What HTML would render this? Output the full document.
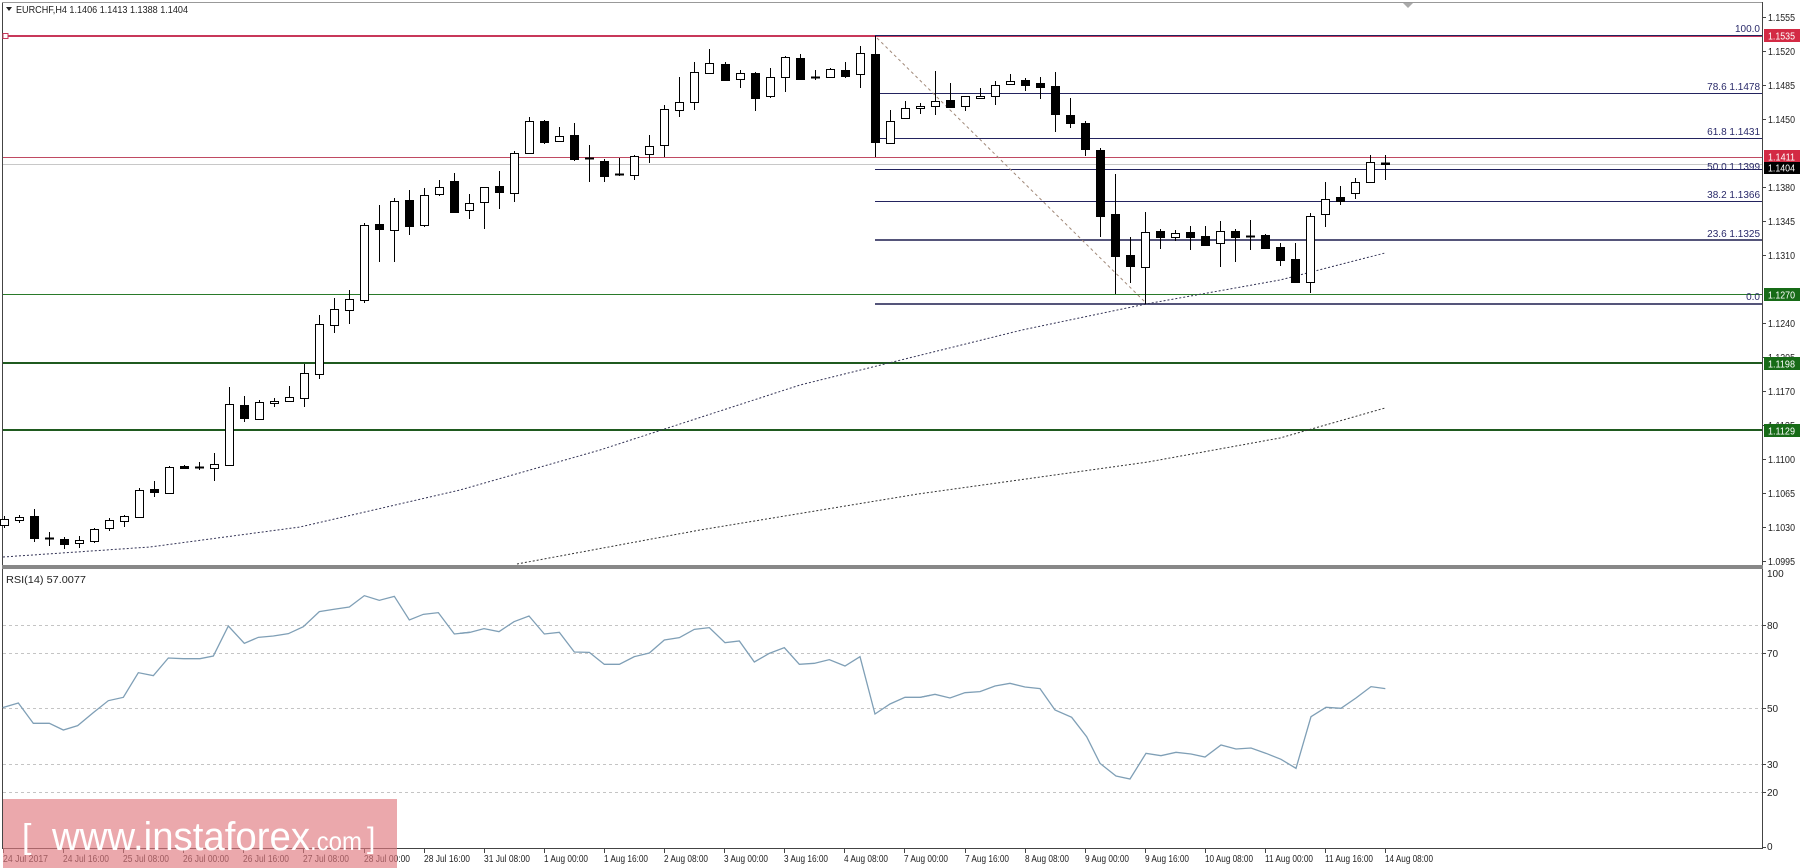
<!DOCTYPE html>
<html><head><meta charset="utf-8"><style>
html,body{margin:0;padding:0;background:#fff;}
svg{display:block;font-family:"Liberation Sans","DejaVu Sans",sans-serif;}
.w{fill:#fff;stroke:#000;stroke-width:1}
.b{fill:#000;stroke:#000;stroke-width:1}
.ax{font-size:10px;fill:#222}
.fl{font-size:10px;fill:#2a2a6a}
.tl{font-size:10px;fill:#222}
</style></head><body>
<svg width="1800" height="868" viewBox="0 0 1800 868" xmlns="http://www.w3.org/2000/svg">
<rect width="1800" height="868" fill="#fff"/>
<!-- frame -->
<g stroke="#444" stroke-width="1" shape-rendering="crispEdges">
<line x1="2.5" y1="2" x2="2.5" y2="848"/>
<line x1="2" y1="2.5" x2="1763" y2="2.5" stroke="#999"/>
<line x1="1762.5" y1="2" x2="1762.5" y2="849"/>
<line x1="2" y1="848.5" x2="1763" y2="848.5"/>
</g>
<rect x="2" y="565" width="1761" height="4" fill="#888"/>
<polygon points="1403,3 1413,3 1408,8" fill="#aaa"/>

<!-- horizontal levels -->
<g shape-rendering="crispEdges">
<line x1="3" y1="36" x2="1762" y2="36" stroke="#c8385a" stroke-width="2"/>
<rect x="3" y="33.5" width="5" height="5" fill="#fff" stroke="#c8385a"/>
<line x1="3" y1="157.5" x2="1762" y2="157.5" stroke="#c04a62" stroke-width="1"/>
<line x1="3" y1="164.5" x2="1762" y2="164.5" stroke="#c8c8c8" stroke-width="1"/>
<line x1="3" y1="294.5" x2="1762" y2="294.5" stroke="#2a7a2a" stroke-width="1"/>
<line x1="3" y1="363" x2="1762" y2="363" stroke="#1f5a1f" stroke-width="2"/>
<line x1="3" y1="430" x2="1762" y2="430" stroke="#1f5a1f" stroke-width="2"/>
<!-- fib -->
<g stroke="#23235f" stroke-width="1">
<line x1="875" y1="35.5" x2="1762" y2="35.5"/>
<line x1="875" y1="93.5" x2="1762" y2="93.5"/>
<line x1="875" y1="138.5" x2="1762" y2="138.5"/>
<line x1="875" y1="169.5" x2="1762" y2="169.5"/>
<line x1="875" y1="201.5" x2="1762" y2="201.5"/>
</g>
<line x1="875" y1="240" x2="1762" y2="240" stroke="#55557a" stroke-width="2"/>
<line x1="875" y1="304" x2="1762" y2="304" stroke="#55557a" stroke-width="2"/>
</g>
<line x1="877" y1="38" x2="1146" y2="303" stroke="#a08878" stroke-width="1" stroke-dasharray="3,3"/>
<g class="fl" text-anchor="end">
<text x="1760" y="32">100.0</text>
<text x="1760" y="90">78.6 1.1478</text>
<text x="1760" y="135">61.8 1.1431</text>
<text x="1760" y="170">50.0 1.1399</text>
<text x="1760" y="198">38.2 1.1366</text>
<text x="1760" y="237">23.6 1.1325</text>
<text x="1760" y="300">0.0</text>
</g>

<!-- moving averages -->
<polyline points="3,557 150,547 300,527 460,490 600,450 800,385 1022,330 1146,304 1280,280 1385,253" fill="none" stroke="#333355" stroke-width="1" stroke-dasharray="2,2"/>
<polyline points="517,564 700,530 918,494 1148,462 1280,438 1385,408" fill="none" stroke="#333" stroke-width="1" stroke-dasharray="2,2"/>

<!-- wicks -->
<path stroke="#000" stroke-width="1" fill="none" shape-rendering="crispEdges" d="M4.5 516V528M19.5 515V523M34.5 509V542M49.5 532V546M64.5 537V549M79.5 536V548M94.5 528V543M109.5 518V531M124.5 515V527M139.5 488V518M154.5 481V497M169.5 466V494M184.5 465V469M199.5 462V470M214.5 453V481M229.5 387V466M244.5 396V422M259.5 400V420M274.5 398V407M289.5 386V402M304.5 364V407M319.5 315V379M334.5 298V333M349.5 290V324M364.5 223V303M379.5 205V262M394.5 198V262M409.5 190V235M424.5 188V227M439.5 180V196M454.5 173V213M469.5 194V219M484.5 187V229M499.5 171V209M514.5 151V202M529.5 117V154M544.5 120V144M559.5 127V142M574.5 123V161M589.5 145V182M604.5 159V182M619.5 158V176M634.5 155V180M649.5 135V163M664.5 105V157M679.5 77V117M694.5 62V110M709.5 49V74M725.5 62V81M740.5 70V88M755.5 72V111M770.5 68V98M785.5 56V92M800.5 54V80M815.5 70V80M830.5 68V78M845.5 62V78M860.5 46V88M875.5 36V157M890.5 110V144M905.5 101V119M920.5 103V114M935.5 71V115M950.5 83V107M965.5 96V111M980.5 88V99M995.5 81V105M1010.5 74V85M1025.5 78V91M1040.5 77V99M1055.5 72V132M1070.5 98V128M1085.5 121V156M1100.5 148V237M1115.5 174V294M1130.5 237V283M1145.5 212V304M1160.5 229V249M1175.5 230V241M1190.5 226V250M1205.5 226V246M1220.5 221V267M1235.5 229V262M1250.5 220V250M1265.5 234V249M1280.5 243V266M1295.5 243V282M1310.5 213V293M1325.5 182V227M1340.5 186V205M1355.5 178V199M1370.5 155V183M1385.5 155V180"/>
<!-- bodies -->
<g shape-rendering="crispEdges">
<rect class="w" x="0.5" y="519.5" width="8" height="6"/>
<rect class="w" x="15.5" y="517.5" width="8" height="3"/>
<rect class="b" x="30.5" y="516.5" width="8" height="22"/>
<rect class="b" x="45.5" y="538" width="8" height="1"/>
<rect class="b" x="60.5" y="539.5" width="8" height="5"/>
<rect class="w" x="75.5" y="540.5" width="8" height="3"/>
<rect class="w" x="90.5" y="529.5" width="8" height="12"/>
<rect class="w" x="105.5" y="520.5" width="8" height="8"/>
<rect class="w" x="120.5" y="516.5" width="8" height="5"/>
<rect class="w" x="135.5" y="490.5" width="8" height="27"/>
<rect class="b" x="150.5" y="489.5" width="8" height="3"/>
<rect class="w" x="165.5" y="467.5" width="8" height="26"/>
<rect class="b" x="180.5" y="466.5" width="8" height="2"/>
<rect class="b" x="195.5" y="467" width="8" height="1"/>
<rect class="w" x="210.5" y="464.5" width="8" height="4"/>
<rect class="w" x="225.5" y="404.5" width="8" height="61"/>
<rect class="b" x="240.5" y="405.5" width="8" height="13"/>
<rect class="w" x="255.5" y="402.5" width="8" height="17"/>
<rect class="w" x="270.5" y="401.5" width="8" height="2"/>
<rect class="w" x="285.5" y="397.5" width="8" height="4"/>
<rect class="w" x="300.5" y="373.5" width="8" height="25"/>
<rect class="w" x="315.5" y="324.5" width="8" height="50"/>
<rect class="w" x="330.5" y="309.5" width="8" height="16"/>
<rect class="w" x="345.5" y="299.5" width="8" height="11"/>
<rect class="w" x="360.5" y="225.5" width="8" height="75"/>
<rect class="b" x="375.5" y="224.5" width="8" height="5"/>
<rect class="w" x="390.5" y="201.5" width="8" height="29"/>
<rect class="b" x="405.5" y="200.5" width="8" height="26"/>
<rect class="w" x="420.5" y="195.5" width="8" height="30"/>
<rect class="w" x="435.5" y="187.5" width="8" height="7"/>
<rect class="b" x="450.5" y="181.5" width="8" height="31"/>
<rect class="w" x="465.5" y="203.5" width="8" height="7"/>
<rect class="w" x="480.5" y="187.5" width="8" height="15"/>
<rect class="b" x="495.5" y="186.5" width="8" height="6"/>
<rect class="w" x="510.5" y="153.5" width="8" height="40"/>
<rect class="w" x="525.5" y="121.5" width="8" height="32"/>
<rect class="b" x="540.5" y="121.5" width="8" height="21"/>
<rect class="w" x="555.5" y="136.5" width="8" height="5"/>
<rect class="b" x="570.5" y="135.5" width="8" height="24"/>
<rect class="b" x="585.5" y="158" width="8" height="1"/>
<rect class="b" x="600.5" y="161.5" width="8" height="15"/>
<rect class="b" x="615.5" y="174" width="8" height="1"/>
<rect class="w" x="630.5" y="156.5" width="8" height="19"/>
<rect class="w" x="645.5" y="146.5" width="8" height="8"/>
<rect class="w" x="660.5" y="109.5" width="8" height="36"/>
<rect class="w" x="675.5" y="102.5" width="8" height="8"/>
<rect class="w" x="690.5" y="72.5" width="8" height="30"/>
<rect class="w" x="705.5" y="63.5" width="8" height="10"/>
<rect class="b" x="721.5" y="64.5" width="8" height="16"/>
<rect class="w" x="736.5" y="73.5" width="8" height="6"/>
<rect class="b" x="751.5" y="73.5" width="8" height="25"/>
<rect class="w" x="766.5" y="77.5" width="8" height="19"/>
<rect class="w" x="781.5" y="57.5" width="8" height="20"/>
<rect class="b" x="796.5" y="58.5" width="8" height="21"/>
<rect class="b" x="811.5" y="77" width="8" height="1"/>
<rect class="w" x="826.5" y="69.5" width="8" height="8"/>
<rect class="b" x="841.5" y="70.5" width="8" height="6"/>
<rect class="w" x="856.5" y="53.5" width="8" height="21"/>
<rect class="b" x="871.5" y="54.5" width="8" height="88"/>
<rect class="w" x="886.5" y="121.5" width="8" height="22"/>
<rect class="w" x="901.5" y="108.5" width="8" height="10"/>
<rect class="w" x="916.5" y="106.5" width="8" height="2"/>
<rect class="w" x="931.5" y="101.5" width="8" height="5"/>
<rect class="b" x="946.5" y="100.5" width="8" height="7"/>
<rect class="w" x="961.5" y="96.5" width="8" height="10"/>
<rect class="w" x="976.5" y="96.5" width="8" height="2"/>
<rect class="w" x="991.5" y="85.5" width="8" height="11"/>
<rect class="w" x="1006.5" y="81.5" width="8" height="3"/>
<rect class="b" x="1021.5" y="80.5" width="8" height="5"/>
<rect class="b" x="1036.5" y="83.5" width="8" height="4"/>
<rect class="b" x="1051.5" y="86.5" width="8" height="28"/>
<rect class="b" x="1066.5" y="115.5" width="8" height="8"/>
<rect class="b" x="1081.5" y="123.5" width="8" height="26"/>
<rect class="b" x="1096.5" y="150.5" width="8" height="66"/>
<rect class="b" x="1111.5" y="214.5" width="8" height="42"/>
<rect class="b" x="1126.5" y="255.5" width="8" height="11"/>
<rect class="w" x="1141.5" y="232.5" width="8" height="35"/>
<rect class="b" x="1156.5" y="231.5" width="8" height="6"/>
<rect class="w" x="1171.5" y="233.5" width="8" height="4"/>
<rect class="b" x="1186.5" y="232.5" width="8" height="5"/>
<rect class="b" x="1201.5" y="236.5" width="8" height="9"/>
<rect class="w" x="1216.5" y="231.5" width="8" height="12"/>
<rect class="b" x="1231.5" y="231.5" width="8" height="6"/>
<rect class="b" x="1246.5" y="236" width="8" height="1"/>
<rect class="b" x="1261.5" y="235.5" width="8" height="13"/>
<rect class="b" x="1276.5" y="247.5" width="8" height="13"/>
<rect class="b" x="1291.5" y="259.5" width="8" height="23"/>
<rect class="w" x="1306.5" y="216.5" width="8" height="66"/>
<rect class="w" x="1321.5" y="199.5" width="8" height="15"/>
<rect class="b" x="1336.5" y="197.5" width="8" height="4"/>
<rect class="w" x="1351.5" y="182.5" width="8" height="11"/>
<rect class="w" x="1366.5" y="162.5" width="8" height="20"/>
<rect class="b" x="1381.5" y="163" width="8" height="1.5"/>
</g>

<!-- title -->
<polygon points="6,7 12,7 9,11" fill="#222"/>
<text x="16" y="13" font-size="10.5" fill="#222" textLength="172" lengthAdjust="spacingAndGlyphs">EURCHF,H4  1.1406 1.1413 1.1388 1.1404</text>

<!-- right axis -->
<g stroke="#444" shape-rendering="crispEdges">
<path d="M1763 17.5h3M1763 51.5h3M1763 85.5h3M1763 119.5h3M1763 187.5h3M1763 221.5h3M1763 255.5h3M1763 323.5h3M1763 357.5h3M1763 391.5h3M1763 425.5h3M1763 459.5h3M1763 493.5h3M1763 527.5h3M1763 561.5h3"/>
</g>
<g class="ax">
<text x="1768" y="21" textLength="27" lengthAdjust="spacingAndGlyphs">1.1555</text>
<text x="1768" y="55" textLength="27" lengthAdjust="spacingAndGlyphs">1.1520</text>
<text x="1768" y="89" textLength="27" lengthAdjust="spacingAndGlyphs">1.1485</text>
<text x="1768" y="123" textLength="27" lengthAdjust="spacingAndGlyphs">1.1450</text>
<text x="1768" y="191" textLength="27" lengthAdjust="spacingAndGlyphs">1.1380</text>
<text x="1768" y="225" textLength="27" lengthAdjust="spacingAndGlyphs">1.1345</text>
<text x="1768" y="259" textLength="27" lengthAdjust="spacingAndGlyphs">1.1310</text>
<text x="1768" y="327" textLength="27" lengthAdjust="spacingAndGlyphs">1.1240</text>
<text x="1768" y="361" textLength="27" lengthAdjust="spacingAndGlyphs">1.1205</text>
<text x="1768" y="395" textLength="27" lengthAdjust="spacingAndGlyphs">1.1170</text>
<text x="1768" y="429" textLength="27" lengthAdjust="spacingAndGlyphs">1.1135</text>
<text x="1768" y="463" textLength="27" lengthAdjust="spacingAndGlyphs">1.1100</text>
<text x="1768" y="497" textLength="27" lengthAdjust="spacingAndGlyphs">1.1065</text>
<text x="1768" y="531" textLength="27" lengthAdjust="spacingAndGlyphs">1.1030</text>
<text x="1768" y="565" textLength="27" lengthAdjust="spacingAndGlyphs">1.0995</text>
</g>
<!-- price boxes -->
<g font-size="10" fill="#fff">
<rect x="1764" y="29" width="36" height="13" fill="#d32a44"/><text x="1768" y="39.5" textLength="27" lengthAdjust="spacingAndGlyphs">1.1535</text>
<rect x="1764" y="150" width="36" height="13" fill="#d32a44"/><text x="1768" y="160.5" textLength="27" lengthAdjust="spacingAndGlyphs">1.1411</text>
<rect x="1764" y="162" width="36" height="12" fill="#000"/><text x="1768" y="171.5" textLength="27" lengthAdjust="spacingAndGlyphs">1.1404</text>
<rect x="1764" y="288" width="36" height="13" fill="#176b17"/><text x="1768" y="298.5" textLength="27" lengthAdjust="spacingAndGlyphs">1.1270</text>
<rect x="1764" y="357" width="36" height="13" fill="#176b17"/><text x="1768" y="367.5" textLength="27" lengthAdjust="spacingAndGlyphs">1.1198</text>
<rect x="1764" y="424" width="36" height="13" fill="#176b17"/><text x="1768" y="434.5" textLength="27" lengthAdjust="spacingAndGlyphs">1.1129</text>
</g>

<!-- RSI -->
<g stroke="#c4c4c4" stroke-width="1" stroke-dasharray="3,3" shape-rendering="crispEdges">
<line x1="3" y1="625.5" x2="1762" y2="625.5"/>
<line x1="3" y1="653.5" x2="1762" y2="653.5"/>
<line x1="3" y1="708.5" x2="1762" y2="708.5"/>
<line x1="3" y1="764.5" x2="1762" y2="764.5"/>
<line x1="3" y1="792.5" x2="1762" y2="792.5"/>
</g>
<text x="6" y="583" font-size="10" fill="#222" textLength="80" lengthAdjust="spacingAndGlyphs">RSI(14) 57.0077</text>
<g stroke="#444" shape-rendering="crispEdges">
<path d="M1763 625.5h3M1763 653.5h3M1763 708.5h3M1763 764.5h3M1763 792.5h3M1763 847.5h3"/>
</g>
<g class="ax">
<text x="1767" y="577">100</text>
<text x="1767" y="629">80</text>
<text x="1767" y="657">70</text>
<text x="1767" y="712">50</text>
<text x="1767" y="768">30</text>
<text x="1767" y="796">20</text>
<text x="1767" y="850">0</text>
</g>
<g fill="none" stroke="#7f9fb6" stroke-width="1.3">
<polyline transform="translate(0,580) scale(0.33333)" vector-effect="non-scaling-stroke" points="8,383 55,369 100,430 148,430 190,450 233,437 280,398 325,362 370,352 415,278 460,287 505,234 550,236 600,236 640,228 685,138 733,190 775,172 820,168 865,161 910,140 958,95 1000,88 1048,81 1093,47 1138,61 1183,49 1228,120 1270,103 1315,98 1363,162 1410,157"/>
<polyline transform="translate(460,580) scale(0.33333)" vector-effect="non-scaling-stroke" points="0,160 30,157 72,146 117,155 162,125 207,108 253,162 298,157 343,216 388,217 433,253 478,253 523,230 568,219 613,180 658,173 703,148 748,143 795,188 838,183 883,246 928,220 973,203 1018,253 1063,250 1108,239 1155,258 1200,230 1245,402 1290,372 1335,352 1380,352 1410,346"/>
<polyline transform="translate(920,580) scale(0.33333)" vector-effect="non-scaling-stroke" points="0,352 45,343 90,354 135,338 180,335 225,318 270,310 315,321 360,326 405,390 455,412 500,470 540,550 588,588 630,597 678,520 723,527 768,517 813,522 855,531 903,495 948,507 993,504 1038,520 1083,538 1128,565 1173,410 1218,382 1263,385 1308,354 1353,320 1396,326"/>
</g>

<!-- time axis -->
<g stroke="#444" shape-rendering="crispEdges">
<path d="M3.5 849v4M63.5 849v4M123.5 849v4M183.5 849v4M243.5 849v4M303.5 849v4M364.5 849v4M424.5 849v4M484.5 849v4M544.5 849v4M604.5 849v4M664.5 849v4M724.5 849v4M784.5 849v4M844.5 849v4M904.5 849v4M965.5 849v4M1025.5 849v4M1085.5 849v4M1145.5 849v4M1205.5 849v4M1265.5 849v4M1325.5 849v4M1385.5 849v4"/>
</g>
<g class="tl">
<text x="3" y="862" textLength="45" lengthAdjust="spacingAndGlyphs">24 Jul 2017</text>
<text x="63" y="862" textLength="46" lengthAdjust="spacingAndGlyphs">24 Jul 16:00</text>
<text x="123" y="862" textLength="46" lengthAdjust="spacingAndGlyphs">25 Jul 08:00</text>
<text x="183" y="862" textLength="46" lengthAdjust="spacingAndGlyphs">26 Jul 00:00</text>
<text x="243" y="862" textLength="46" lengthAdjust="spacingAndGlyphs">26 Jul 16:00</text>
<text x="303" y="862" textLength="46" lengthAdjust="spacingAndGlyphs">27 Jul 08:00</text>
<text x="364" y="862" textLength="46" lengthAdjust="spacingAndGlyphs">28 Jul 00:00</text>
<text x="424" y="862" textLength="46" lengthAdjust="spacingAndGlyphs">28 Jul 16:00</text>
<text x="484" y="862" textLength="46" lengthAdjust="spacingAndGlyphs">31 Jul 08:00</text>
<text x="544" y="862" textLength="44" lengthAdjust="spacingAndGlyphs">1 Aug 00:00</text>
<text x="604" y="862" textLength="44" lengthAdjust="spacingAndGlyphs">1 Aug 16:00</text>
<text x="664" y="862" textLength="44" lengthAdjust="spacingAndGlyphs">2 Aug 08:00</text>
<text x="724" y="862" textLength="44" lengthAdjust="spacingAndGlyphs">3 Aug 00:00</text>
<text x="784" y="862" textLength="44" lengthAdjust="spacingAndGlyphs">3 Aug 16:00</text>
<text x="844" y="862" textLength="44" lengthAdjust="spacingAndGlyphs">4 Aug 08:00</text>
<text x="904" y="862" textLength="44" lengthAdjust="spacingAndGlyphs">7 Aug 00:00</text>
<text x="965" y="862" textLength="44" lengthAdjust="spacingAndGlyphs">7 Aug 16:00</text>
<text x="1025" y="862" textLength="44" lengthAdjust="spacingAndGlyphs">8 Aug 08:00</text>
<text x="1085" y="862" textLength="44" lengthAdjust="spacingAndGlyphs">9 Aug 00:00</text>
<text x="1145" y="862" textLength="44" lengthAdjust="spacingAndGlyphs">9 Aug 16:00</text>
<text x="1205" y="862" textLength="48" lengthAdjust="spacingAndGlyphs">10 Aug 08:00</text>
<text x="1265" y="862" textLength="48" lengthAdjust="spacingAndGlyphs">11 Aug 00:00</text>
<text x="1325" y="862" textLength="48" lengthAdjust="spacingAndGlyphs">11 Aug 16:00</text>
<text x="1385" y="862" textLength="48" lengthAdjust="spacingAndGlyphs">14 Aug 08:00</text>
</g>

<!-- watermark -->
<rect x="3" y="799" width="394" height="69" fill="#e07a80" fill-opacity="0.65"/>
<text x="22" y="848" font-size="34" fill="#fff" font-family="Liberation Sans, sans-serif">[</text>
<text x="52" y="850" font-size="40" fill="#fff" font-family="Liberation Sans, sans-serif" textLength="258" lengthAdjust="spacingAndGlyphs">www.instaforex</text>
<text x="310" y="850" font-size="26" fill="#fff" font-family="Liberation Sans, sans-serif" textLength="52" lengthAdjust="spacingAndGlyphs">.com</text>
<text x="367" y="848" font-size="30" fill="#fff" font-family="Liberation Sans, sans-serif">]</text>
</svg>
</body></html>
